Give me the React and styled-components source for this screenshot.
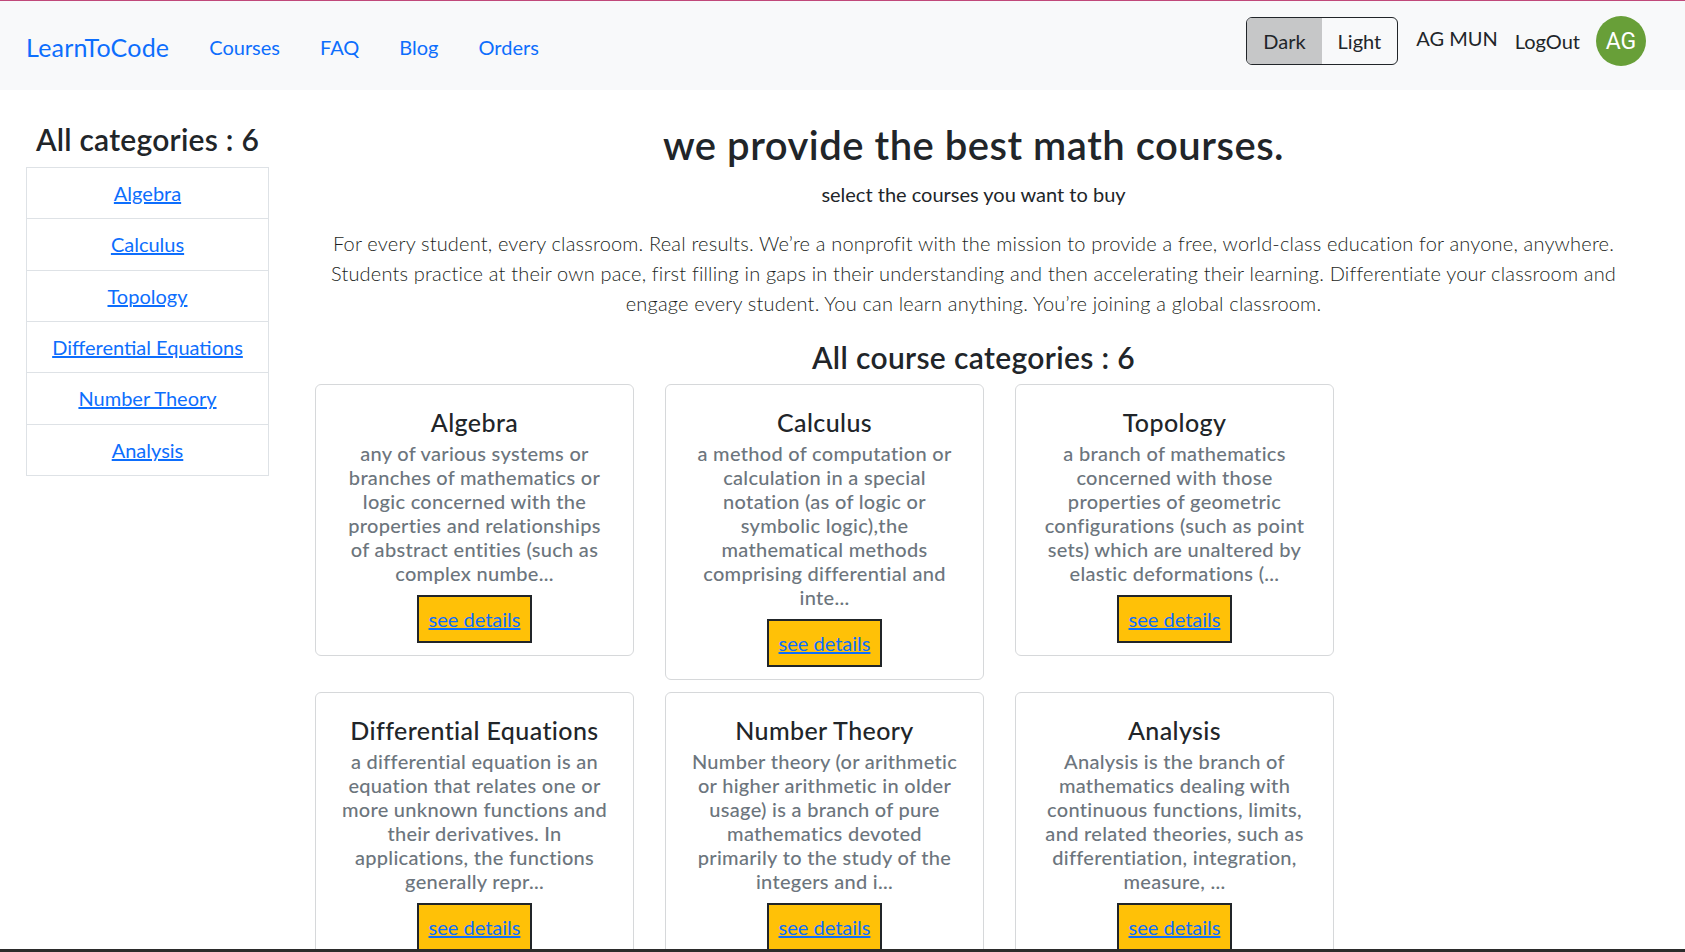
import React from 'react'
import styled, { createGlobalStyle } from 'styled-components'

const GlobalStyle = createGlobalStyle`
    body {
        margin: 0;
        font-family: Lato, 'Noto Sans', sans-serif;
        color: #212529;
        background: #fff;
    }
    * { box-sizing: border-box; }
`

const categories = [
    {
        name: 'Algebra',
        lines: ['any of various systems or', 'branches of mathematics or', 'logic concerned with the', 'properties and relationships', 'of abstract entities (such as', 'complex numbe...'],
    },
    {
        name: 'Calculus',
        lines: ['a method of computation or', 'calculation in a special', 'notation (as of logic or', 'symbolic logic),the', 'mathematical methods', 'comprising differential and', 'inte...'],
    },
    {
        name: 'Topology',
        lines: ['a branch of mathematics', 'concerned with those', 'properties of geometric', 'configurations (such as point', 'sets) which are unaltered by', 'elastic deformations (...'],
    },
    {
        name: 'Differential Equations',
        lines: ['a differential equation is an', 'equation that relates one or', 'more unknown functions and', 'their derivatives. In', 'applications, the functions', 'generally repr...'],
    },
    {
        name: 'Number Theory',
        lines: ['Number theory (or arithmetic', 'or higher arithmetic in older', 'usage) is a branch of pure', 'mathematics devoted', 'primarily to the study of the', 'integers and i...'],
    },
    {
        name: 'Analysis',
        lines: ['Analysis is the branch of', 'mathematics dealing with', 'continuous functions, limits,', 'and related theories, such as', 'differentiation, integration,', 'measure, ...'],
    },
]

const intro = [
    'For every student, every classroom. Real results. We’re a nonprofit with the mission to provide a free, world-class education for anyone, anywhere.',
    'Students practice at their own pace, first filling in gaps in their understanding and then accelerating their learning. Differentiate your classroom and',
    'engage every student. You can learn anything. You’re joining a global classroom.',
]

const Navbar = styled.nav`
    height: 90px;
    border-top: 1px solid #c0497a;
    background-color: #f8f9fa;
    display: flex;
    justify-content: space-between;
    align-items: flex-start;
    padding: 0 39px 0 26px;
`

const NavLeft = styled.div`
    display: flex;
    align-items: center;
    margin-top: 31px;
`

const Brand = styled.a`
    font-size: 25px;
    line-height: 30px;
    letter-spacing: 0.2px;
    color: #0d6efd;
    text-decoration: none;
    margin-right: 20px;
`

const NavLink = styled.a`
    font-size: 20px;
    line-height: 30px;
    color: #0d6efd;
    text-decoration: none;
    padding: 0 20px;
`

const NavRight = styled.div`
    display: flex;
    align-items: center;
    margin-top: 15px;
`

const ThemeGroup = styled.div`
    display: flex;
    border: 1px solid #212529;
    border-radius: 6px;
    overflow: hidden;
    margin-right: 18px;
`

const ThemeButton = styled.button`
    font-family: inherit;
    font-size: 20px;
    line-height: 30px;
    padding: 8px 16px;
    border: none;
    color: #212529;
    background-color: ${(props) => props.active ? '#c6c7c8' : 'transparent'};
`

const UserName = styled.span`
    font-size: 20px;
    line-height: 30px;
    margin: 0 17px 6px 0;
`

const LogOut = styled.span`
    font-size: 20px;
    line-height: 30px;
    margin-right: 16px;
`

const Avatar = styled.div`
    width: 50px;
    height: 50px;
    border-radius: 50%;
    background-color: #689f38;
    color: #fff;
    display: grid;
    place-content: center;
    font-family: Roboto, Arial, sans-serif;
    font-size: 23px;
`

const Layout = styled.div`
    display: grid;
    grid-template-columns: 296px 1fr;
`

const Sidebar = styled.aside`
    padding: 31px 0 0 26px;
    width: 269px;
`

const SideTitle = styled.h4`
    margin: 0 0 10px;
    font-size: 30px;
    line-height: 36px;
    font-weight: 600;
    letter-spacing: 0.25px;
    text-align: center;
`

const SideList = styled.ul`
    list-style: none;
    margin: 0;
    padding: 0;
`

const SideItem = styled.li`
    border: 1px solid #dee2e6;
    padding: 10px 16px;
    text-align: center;
    font-size: 20px;
    line-height: 30.33px;
    & + & { border-top: none; }
    a { color: #0d6efd; }
`

const Main = styled.main`
    padding: 31px 34px 40px 0;
    text-align: center;
`

const Heading = styled.h1`
    margin: 0 0 10px;
    font-size: 40px;
    line-height: 48px;
    font-weight: 600;
    letter-spacing: 0.5px;
`

const Subtitle = styled.p`
    margin: 0 0 19px;
    font-size: 20px;
    line-height: 30px;
`

const Lead = styled.p`
    margin: 0 0 21px;
    font-size: 20px;
    line-height: 30px;
    font-weight: 300;
    letter-spacing: 0.18px;
    color: #1c1f23;
    white-space: nowrap;
`

const SectionTitle = styled.h3`
    margin: 0 0 9px;
    font-size: 30px;
    line-height: 36px;
    font-weight: 600;
    letter-spacing: 0.35px;
`

const CardGrid = styled.div`
    display: grid;
    grid-template-columns: repeat(3, 319px);
    column-gap: 31px;
    row-gap: 12px;
    align-items: start;
    padding-left: 19px;
`

const Card = styled.div`
    border: 1px solid #d6d8da;
    border-radius: 6px;
    padding: 22px 20px 12px;
    display: flex;
    flex-direction: column;
    align-items: center;
`

const CardTitle = styled.h5`
    margin: 0 0 4px;
    font-size: 25px;
    line-height: 30px;
    font-weight: 500;
    letter-spacing: 0.4px;
`

const CardText = styled.h6`
    margin: 0 0 10px;
    font-size: 20px;
    line-height: 24px;
    font-weight: 500;
    letter-spacing: 0.3px;
    color: #6c757d;
    white-space: nowrap;
`

const DetailsButton = styled.button`
    font-family: inherit;
    height: 48px;
    background-color: #ffc107;
    border: 2px solid #212529;
    border-radius: 0;
    padding: 0 10px;
    font-size: 20px;
    line-height: 30px;
    a { color: #0d6efd; }
`

const BottomEdge = styled.div`
    position: fixed;
    left: 0;
    right: 0;
    bottom: 0;
    height: 3px;
    background-color: #2b2b2b;
`

const App = () => {
    return (
        <>
            <GlobalStyle />
            <Navbar>
                <NavLeft>
                    <Brand href="#">LearnToCode</Brand>
                    <NavLink href="#">Courses</NavLink>
                    <NavLink href="#">FAQ</NavLink>
                    <NavLink href="#">Blog</NavLink>
                    <NavLink href="#">Orders</NavLink>
                </NavLeft>
                <NavRight>
                    <ThemeGroup>
                        <ThemeButton active>Dark</ThemeButton>
                        <ThemeButton>Light</ThemeButton>
                    </ThemeGroup>
                    <UserName>AG MUN</UserName>
                    <LogOut>LogOut</LogOut>
                    <Avatar>AG</Avatar>
                </NavRight>
            </Navbar>
            <Layout>
                <Sidebar>
                    <SideTitle>All categories : {categories.length}</SideTitle>
                    <SideList>
                        {categories.map(({ name }) => (
                            <SideItem key={name}><a href="#">{name}</a></SideItem>
                        ))}
                    </SideList>
                </Sidebar>
                <Main>
                    <Heading>we provide the best math courses.</Heading>
                    <Subtitle>select the courses you want to buy</Subtitle>
                    <Lead>
                        {intro.map((line, i) => (
                            <React.Fragment key={i}>{line}{i < intro.length - 1 && <br />}</React.Fragment>
                        ))}
                    </Lead>
                    <SectionTitle>All course categories : {categories.length}</SectionTitle>
                    <CardGrid>
                        {categories.map(({ name, lines }) => (
                            <Card key={name}>
                                <CardTitle>{name}</CardTitle>
                                <CardText>
                                    {lines.map((line, i) => (
                                        <React.Fragment key={i}>{line}{i < lines.length - 1 && <br />}</React.Fragment>
                                    ))}
                                </CardText>
                                <DetailsButton><a href="#">see details</a></DetailsButton>
                            </Card>
                        ))}
                    </CardGrid>
                </Main>
            </Layout>
            <BottomEdge />
        </>
    )
}

export default App
